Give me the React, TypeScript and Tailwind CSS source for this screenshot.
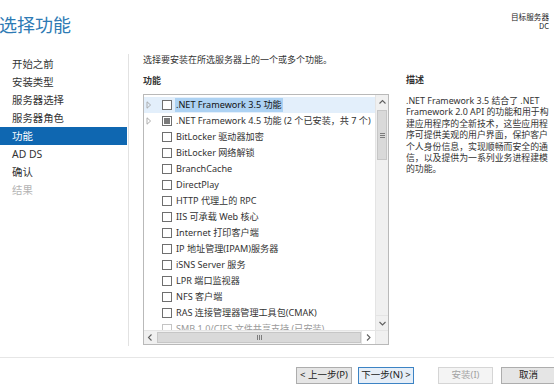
import React from "react";

const navItems = [
  { t: "开始之前", s: "n" },
  { t: "安装类型", s: "n" },
  { t: "服务器选择", s: "n" },
  { t: "服务器角色", s: "n" },
  { t: "功能", s: "sel" },
  { t: "AD DS", s: "n" },
  { t: "确认", s: "n" },
  { t: "结果", s: "dis" },
];

type Item = { t: string; exp?: boolean; sel?: boolean; ind?: boolean; grey?: boolean };
const items: Item[] = [
  { t: ".NET Framework 3.5 功能", exp: true, sel: true },
  { t: ".NET Framework 4.5 功能 (2 个已安装，共 7 个)", exp: true, ind: true },
  { t: "BitLocker 驱动器加密" },
  { t: "BitLocker 网络解锁" },
  { t: "BranchCache" },
  { t: "DirectPlay" },
  { t: "HTTP 代理上的 RPC" },
  { t: "IIS 可承载 Web 核心" },
  { t: "Internet 打印客户端" },
  { t: "IP 地址管理(IPAM)服务器" },
  { t: "iSNS Server 服务" },
  { t: "LPR 端口监视器" },
  { t: "NFS 客户端" },
  { t: "RAS 连接管理器管理工具包(CMAK)" },
  { t: "SMB 1.0/CIFS 文件共享支持 (已安装)", grey: true },
];

const descLines = [
  ".NET Framework 3.5 结合了 .NET",
  "Framework 2.0 API 的功能和用于构",
  "建应用程序的全新技术，这些应用程",
  "序可提供美观的用户界面，保护客户",
  "个人身份信息，实现顺畅而安全的通",
  "信，以及提供为一系列业务进程建模",
  "的功能。",
];

function Chevron({ dir }: { dir: "up" | "down" | "left" | "right" }) {
  const d =
    dir === "up"
      ? "M1.5 5.5 L4.5 2.5 L7.5 5.5"
      : dir === "down"
      ? "M1.5 3 L4.5 6 L7.5 3"
      : dir === "left"
      ? "M5.5 1.5 L2.5 4.5 L5.5 7.5"
      : "M3 1.5 L6 4.5 L3 7.5";
  return (
    <svg width="9" height="9" viewBox="0 0 9 9">
      <path d={d} fill="none" stroke="#606060" strokeWidth="1.1" />
    </svg>
  );
}

function Expander() {
  return (
    <svg width="6" height="8" viewBox="0 0 6 8">
      <path d="M1 0.8 L4.6 4 L1 7.2 Z" fill="none" stroke="#a6a6a6" strokeWidth="0.9" />
    </svg>
  );
}

export default function App() {
  return (
    <div className="w-[554px] h-[385px] bg-white overflow-hidden flex flex-col font-['Noto_Sans','Noto_Sans_CJK_SC',sans-serif] text-[#1a1a1a]">
      {/* header */}
      <div className="h-[54px] flex justify-between shrink-0">
        <div className="pt-[14px] -ml-[1px] text-[18px] leading-[20px] text-[#2d7ab4] font-['Noto_Sans_CJK_SC',sans-serif]">
          选择功能
        </div>
        <div className="pt-[12px] pr-[5px] text-right text-[7.6px] leading-[9px] text-[#222] font-['Noto_Sans_CJK_SC',sans-serif]">
          <div>目标服务器</div>
          <div>DC</div>
        </div>
      </div>

      {/* main */}
      <div className="flex h-[292px] shrink-0">
        {/* nav */}
        <div className="w-[129px] shrink-0 border-r border-[#e2e2e2] pt-[1px]">
          {navItems.map((n) => (
            <div
              key={n.t}
              className={
                "h-[18px] leading-[18px] pl-[12px] text-[10.4px] " +
                (n.s === "sel"
                  ? "bg-[#0f67b1] text-white mr-[1px]"
                  : n.s === "dis"
                  ? "text-[#b4b4b4]"
                  : "text-[#333]")
              }
            >
              {n.t}
            </div>
          ))}
        </div>

        {/* content */}
        <div className="pl-[14px] flex flex-col">
          <div className="h-[12px] leading-[12px] text-[9px] text-[#333]">
            选择要安装在所选服务器上的一个或多个功能。
          </div>
          <div className="flex">
            <div className="w-[246px] shrink-0">
              <div className="mt-[9px] h-[12px] leading-[12px] text-[9px] font-semibold text-[#333]">功能</div>
              {/* listbox */}
              <div className="mt-[7px] w-[246px] h-[251px] border border-[#b9b9b9] flex flex-col">
                <div className="flex h-[235px]">
                  <div className="w-[231px] overflow-hidden pt-[2px]">
                    {items.map((it, i) => (
                      <div
                        key={i}
                        className={
                          "h-[16px] flex items-center whitespace-nowrap " +
                          (it.sel ? "bg-[#e3effb]" : "")
                        }
                      >
                        <div className="w-[18px] pl-[2px] flex items-center shrink-0">
                          {it.exp ? <Expander /> : null}
                        </div>
                        <div
                          className={
                            "w-[10px] h-[10px] border shrink-0 flex items-center justify-center bg-white " +
                            (it.grey ? "border-[#c4c4c4]" : "border-[#6f6f6f]")
                          }
                        >
                          {it.ind ? <div className="w-[6px] h-[6px] bg-[#7a7a7a]" /> : null}
                        </div>
                        <div
                          className={
                            "ml-[3px] px-[1px] h-[14px] leading-[14px] text-[9.1px] " +
                            (it.sel ? "bg-[#add2f3] text-[#111]" : it.grey ? "text-[#9a9a9a]" : "text-[#333]")
                          }
                        >
                          {it.t}
                        </div>
                      </div>
                    ))}
                  </div>
                  {/* vertical scrollbar */}
                  <div className="w-[13px] bg-[#f0f0f0] border-l border-[#e4e4e4] flex flex-col">
                    <div className="h-[15px] flex items-center justify-center">
                      <Chevron dir="up" />
                    </div>
                    <div className="h-[50px] mx-[1px] bg-[#d9d9d9] border border-[#c6c6c6] flex flex-col items-center justify-center gap-[1px]">
                      <div className="w-[5px] h-[1px] bg-[#7c7c7c]" />
                      <div className="w-[5px] h-[1px] bg-[#7c7c7c]" />
                      <div className="w-[5px] h-[1px] bg-[#7c7c7c]" />
                    </div>
                    <div className="flex-1" />
                    <div className="h-[15px] flex items-center justify-center border-t border-[#e4e4e4]">
                      <Chevron dir="down" />
                    </div>
                  </div>
                </div>
                {/* horizontal scrollbar */}
                <div className="flex h-[14px] border-t border-[#e4e4e4]">
                  <div className="w-[231px] flex bg-[#f0f0f0]">
                    <div className="w-[13px] flex items-center justify-center">
                      <Chevron dir="left" />
                    </div>
                    <div className="w-[204px] my-[1px] bg-[#d9d9d9] border border-[#c6c6c6] flex items-center justify-center gap-[1px]">
                      <div className="w-[1px] h-[5px] bg-[#7c7c7c]" />
                      <div className="w-[1px] h-[5px] bg-[#7c7c7c]" />
                      <div className="w-[1px] h-[5px] bg-[#7c7c7c]" />
                    </div>
                    <div className="w-[14px] flex items-center justify-center bg-white border-l border-[#e4e4e4]">
                      <Chevron dir="right" />
                    </div>
                  </div>
                  <div className="w-[13px] bg-[#f0f0f0] border-l border-[#e4e4e4]" />
                </div>
              </div>
            </div>

            {/* description */}
            <div className="ml-[17px] w-[150px] shrink-0">
              <div className="mt-[8px] h-[12px] leading-[12px] text-[9px] font-semibold text-[#333]">描述</div>
              <div className="mt-[9px] text-[8.9px] leading-[11.4px] text-[#333] whitespace-nowrap">
                {descLines.map((l, i) => (
                  <div key={i}>{l}</div>
                ))}
              </div>
            </div>
          </div>
        </div>
      </div>

      {/* footer */}
      <div className="flex-1 flex flex-col">
        <div className="mt-[11px] h-[1px] bg-[#e6e6e6]" />
        <div className="mt-[9px] flex justify-end -mr-[2px] text-[9.5px]">
          <div className="w-[56px] h-[17px] border border-[#adadad] bg-[#e5e5e5] flex items-center justify-center text-[#222]">
            &lt; 上一步(P)
          </div>
          <div className="ml-[6px] w-[56px] h-[17px] border border-[#3c83c4] bg-[#e6eef7] flex items-center justify-center text-[#222]">
            下一步(N) &gt;
          </div>
          <div className="ml-[24px] w-[55px] h-[17px] border border-[#d5d5d5] bg-[#f4f4f4] flex items-center justify-center text-[#a3a3a3]">
            安装(I)
          </div>
          <div className="ml-[8px] w-[55px] h-[17px] border border-[#adadad] bg-[#e5e5e5] flex items-center justify-center text-[#222]">
            取消
          </div>
        </div>
      </div>
    </div>
  );
}
